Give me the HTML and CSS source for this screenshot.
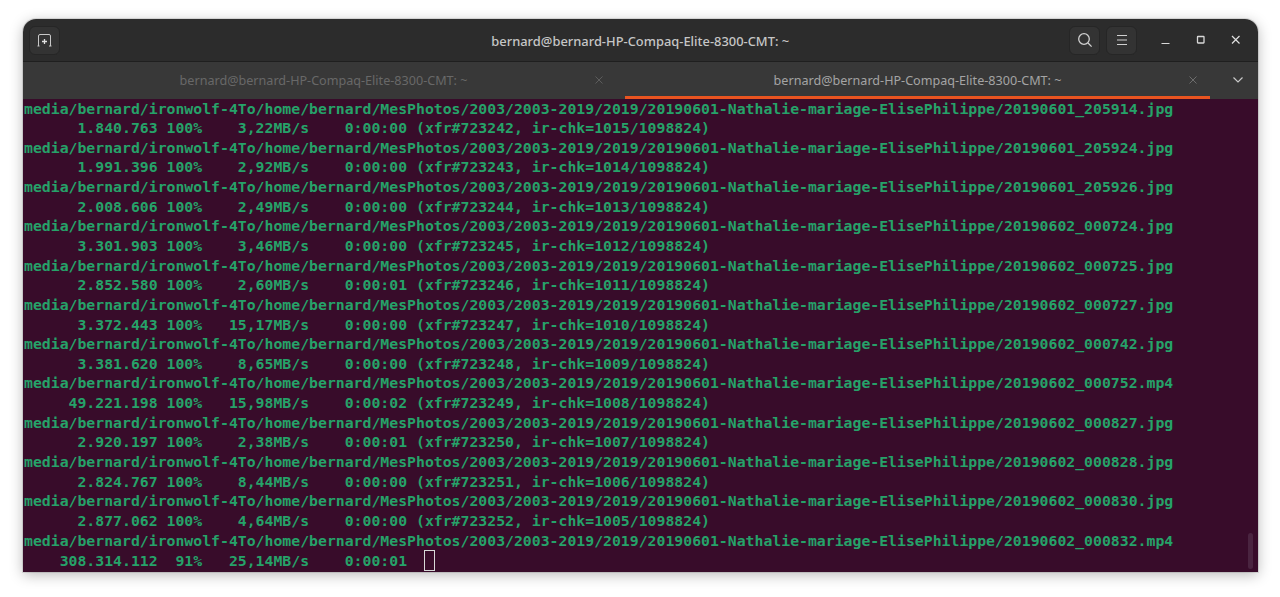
FILE: index.html
```html
<!DOCTYPE html>
<html lang="fr">
<head>
<meta charset="utf-8">
<title>bernard@bernard-HP-Compaq-Elite-8300-CMT: ~</title>
<link rel="stylesheet" href="styles.css">
</head>
<body>
<div class="window">
  <header class="titlebar">
    <div class="tb-left">
      <button class="btn" aria-label="Nouvel onglet">
        <svg width="16" height="16" viewBox="0 0 16 16" fill="none" stroke="#c8c8c8" stroke-width="1"><path d="M2.500 14V4a1.500 1.500 0 0 1 1.500-1.500h9A1.500 1.500 0 0 1 14.500 4v10M1.500 14h2M13 14h2.500"/><path d="M8.500 7v5M6 9.500h5" stroke-width="1.300" stroke="#e0e0e0"/></svg>
      </button>
    </div>
    <div class="title">bernard@bernard-HP-Compaq-Elite-8300-CMT: ~</div>
    <div class="tb-right">
      <div class="actions">
        <button class="btn" aria-label="Rechercher">
          <svg width="16" height="16" viewBox="0 0 16 16" fill="none" stroke="#d0d0d0" stroke-width="1.300"><circle cx="7" cy="7" r="5.300"/><path d="M11 11l3.600 3.600"/></svg>
        </button>
        <button class="btn" aria-label="Menu">
          <svg width="16" height="16" viewBox="0 0 16 16" fill="none" stroke="#d0d0d0" stroke-width="1.200"><path d="M3 3.500h10M3 8h10M3 12.500h10"/></svg>
        </button>
      </div>
      <div class="winctl">
        <svg class="ctl" width="12" height="12" viewBox="0 0 12 12" fill="none" stroke="#d8d8d8" stroke-width="1.200"><path d="M1.500 9.500h8"/></svg>
        <svg class="ctl" width="12" height="12" viewBox="0 0 12 12" fill="none" stroke="#d8d8d8" stroke-width="1.300"><rect x="2.500" y="2.500" width="6.500" height="6.500" rx=".5"/></svg>
        <svg class="ctl" width="12" height="12" viewBox="0 0 12 12" fill="none" stroke="#e0e0e0" stroke-width="1.200"><path d="M2 2l7.500 7.500M9.500 2L2 9.500"/></svg>
      </div>
    </div>
  </header>
  <nav class="tabbar">
    <div class="tab">
      <span class="tab-label">bernard@bernard-HP-Compaq-Elite-8300-CMT: ~</span>
      <svg class="tab-close" width="10" height="10" viewBox="0 0 10 10" fill="none" stroke="#5c5c5c" stroke-width="1"><path d="M1.500 1.500l7 7M8.500 1.500l-7 7"/></svg>
    </div>
    <div class="tab tab-active">
      <span class="tab-label">bernard@bernard-HP-Compaq-Elite-8300-CMT: ~</span>
      <svg class="tab-close" width="10" height="10" viewBox="0 0 10 10" fill="none" stroke="#6c6c6c" stroke-width="1"><path d="M1.500 1.500l7 7M8.500 1.500l-7 7"/></svg>
    </div>
    <div class="tab-menu">
      <svg width="12" height="8" viewBox="0 0 12 8" fill="none" stroke="#c8c8c8" stroke-width="1.200"><path d="M1.500 1.500L6 6l4.500-4.500"/></svg>
    </div>
  </nav>
  <main class="term">
<pre class="output">media/bernard/ironwolf-4To/home/bernard/MesPhotos/2003/2003-2019/2019/20190601-Nathalie-mariage-ElisePhilippe/20190601_205914.jpg
      1.840.763 100%    3,22MB/s    0:00:00 (xfr#723242, ir-chk=1015/1098824)
media/bernard/ironwolf-4To/home/bernard/MesPhotos/2003/2003-2019/2019/20190601-Nathalie-mariage-ElisePhilippe/20190601_205924.jpg
      1.991.396 100%    2,92MB/s    0:00:00 (xfr#723243, ir-chk=1014/1098824)
media/bernard/ironwolf-4To/home/bernard/MesPhotos/2003/2003-2019/2019/20190601-Nathalie-mariage-ElisePhilippe/20190601_205926.jpg
      2.008.606 100%    2,49MB/s    0:00:00 (xfr#723244, ir-chk=1013/1098824)
media/bernard/ironwolf-4To/home/bernard/MesPhotos/2003/2003-2019/2019/20190601-Nathalie-mariage-ElisePhilippe/20190602_000724.jpg
      3.301.903 100%    3,46MB/s    0:00:00 (xfr#723245, ir-chk=1012/1098824)
media/bernard/ironwolf-4To/home/bernard/MesPhotos/2003/2003-2019/2019/20190601-Nathalie-mariage-ElisePhilippe/20190602_000725.jpg
      2.852.580 100%    2,60MB/s    0:00:01 (xfr#723246, ir-chk=1011/1098824)
media/bernard/ironwolf-4To/home/bernard/MesPhotos/2003/2003-2019/2019/20190601-Nathalie-mariage-ElisePhilippe/20190602_000727.jpg
      3.372.443 100%   15,17MB/s    0:00:00 (xfr#723247, ir-chk=1010/1098824)
media/bernard/ironwolf-4To/home/bernard/MesPhotos/2003/2003-2019/2019/20190601-Nathalie-mariage-ElisePhilippe/20190602_000742.jpg
      3.381.620 100%    8,65MB/s    0:00:00 (xfr#723248, ir-chk=1009/1098824)
media/bernard/ironwolf-4To/home/bernard/MesPhotos/2003/2003-2019/2019/20190601-Nathalie-mariage-ElisePhilippe/20190602_000752.mp4
     49.221.198 100%   15,98MB/s    0:00:02 (xfr#723249, ir-chk=1008/1098824)
media/bernard/ironwolf-4To/home/bernard/MesPhotos/2003/2003-2019/2019/20190601-Nathalie-mariage-ElisePhilippe/20190602_000827.jpg
      2.920.197 100%    2,38MB/s    0:00:01 (xfr#723250, ir-chk=1007/1098824)
media/bernard/ironwolf-4To/home/bernard/MesPhotos/2003/2003-2019/2019/20190601-Nathalie-mariage-ElisePhilippe/20190602_000828.jpg
      2.824.767 100%    8,44MB/s    0:00:00 (xfr#723251, ir-chk=1006/1098824)
media/bernard/ironwolf-4To/home/bernard/MesPhotos/2003/2003-2019/2019/20190601-Nathalie-mariage-ElisePhilippe/20190602_000830.jpg
      2.877.062 100%    4,64MB/s    0:00:00 (xfr#723252, ir-chk=1005/1098824)
media/bernard/ironwolf-4To/home/bernard/MesPhotos/2003/2003-2019/2019/20190601-Nathalie-mariage-ElisePhilippe/20190602_000832.mp4
    308.314.112  91%   25,14MB/s    0:00:01  <span class="cursor"></span></pre>
    <div class="scrollthumb"></div>
  </main>
</div>
</body>
</html>
```
FILE: styles.css
```css
* { box-sizing: border-box; }
html, body { margin: 0; height: 100%; background: #fff; overflow: hidden; }
body { padding: 19px 22px 25px 22.500px; }

.window {
  width: 1235.500px;
  height: 553px;
  display: flex;
  flex-direction: column;
  border-radius: 13px 13px 0 0;
  overflow: hidden;
  box-shadow: 0 0 0 1px rgba(0,0,0,.1), 0 3px 14px rgba(0,0,0,.28);
}

.titlebar {
  height: 43px;
  flex: none;
  display: grid;
  grid-template-columns: 1fr auto 1fr;
  align-items: center;
  background: #2c2c2c;
  border-bottom: 1px solid #1f1f1f;
  padding: 0 6px;
}
.tb-left { display: flex; }
.tb-right { display: flex; justify-content: flex-end; align-items: center; }
.btn {
  width: 31px;
  height: 29px;
  padding: 0;
  display: flex;
  align-items: center;
  justify-content: center;
  background: #333;
  border: 1px solid #262626;
  border-radius: 6px;
}
.title {
  text-align: center;
  color: #c6c6c6;
  padding-top: 2px;
  font: 500 12.900px/1 "Noto Sans", sans-serif;
}
.actions { display: flex; gap: 6px; }
.winctl { display: flex; gap: 24px; margin: 0 10px 0 23px; }
.winctl .ctl:nth-child(2) { margin-right: -1px; margin-left: -1px; }

.tabbar {
  height: 36.500px;
  flex: none;
  display: flex;
  align-items: stretch;
  background: #383838;
  padding-left: 8.500px;
  gap: 9px;
}
.tab {
  width: 585px;
  display: flex;
  align-items: center;
  justify-content: center;
  position: relative;
  color: #686868;
  padding-top: 2px;
  font: 400 12.600px/1 "Noto Sans", sans-serif;
}
.tab-active {
  color: #a4a4a4;
  box-shadow: inset 0 -3px 0 #e95420;
}
.tab-close { position: absolute; right: 12px; top: 13px; }
.tab-menu {
  flex: 1;
  display: flex;
  align-items: center;
  justify-content: center;
  padding-right: 2px;
}

.term {
  flex: 1;
  background: #380c2a;
  position: relative;
  overflow: hidden;
}
.output {
  margin: 0;
  padding: 0 0 0 1.500px;
  color: #26a269;
  font: 700 14.800px/19.640px "DejaVu Sans Mono", monospace;
  white-space: pre;
}
.cursor {
  display: inline-block;
  width: 11px;
  height: 21px;
  margin-left: -1px;
  vertical-align: -5px;
  border: 1px solid #d8d8d8;
}
.scrollthumb {
  position: absolute;
  right: 5px;
  bottom: 3px;
  width: 5px;
  height: 36px;
  border-radius: 3px;
  background: #4a2440;
}
```
